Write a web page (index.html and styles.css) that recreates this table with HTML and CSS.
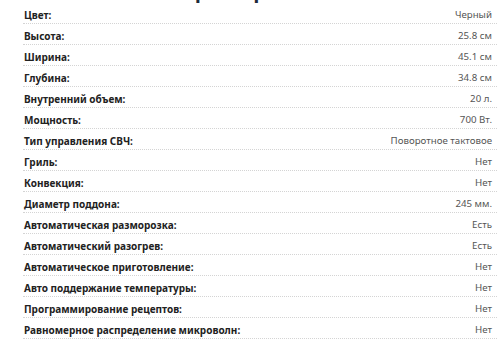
FILE: index.html
```html
<!DOCTYPE html>
<html lang="ru">
<head>
<meta charset="utf-8">
<link rel="stylesheet" href="styles.css">
</head>
<body>
<h2 class="title">Характеристики</h2>
<div class="specs">
  <div class="row"><span class="label">Цвет:</span><span class="value">Черный</span></div>
  <div class="row"><span class="label">Высота:</span><span class="value">25.8 см</span></div>
  <div class="row"><span class="label">Ширина:</span><span class="value">45.1 см</span></div>
  <div class="row"><span class="label">Глубина:</span><span class="value">34.8 см</span></div>
  <div class="row"><span class="label">Внутренний объем:</span><span class="value">20 л.</span></div>
  <div class="row"><span class="label">Мощность:</span><span class="value">700 Вт.</span></div>
  <div class="row"><span class="label">Тип управления СВЧ:</span><span class="value">Поворотное тактовое</span></div>
  <div class="row"><span class="label">Гриль:</span><span class="value">Нет</span></div>
  <div class="row"><span class="label">Конвекция:</span><span class="value">Нет</span></div>
  <div class="row"><span class="label">Диаметр поддона:</span><span class="value">245 мм.</span></div>
  <div class="row"><span class="label">Автоматическая разморозка:</span><span class="value">Есть</span></div>
  <div class="row"><span class="label">Автоматический разогрев:</span><span class="value">Есть</span></div>
  <div class="row"><span class="label">Автоматическое приготовление:</span><span class="value">Нет</span></div>
  <div class="row"><span class="label">Авто поддержание температуры:</span><span class="value">Нет</span></div>
  <div class="row"><span class="label">Программирование рецептов:</span><span class="value">Нет</span></div>
  <div class="row"><span class="label">Равномерное распределение микроволн:</span><span class="value">Нет</span></div>
</div>
</body>
</html>
```
FILE: styles.css
```css
html, body {
  margin: 0;
  padding: 0;
  background: #fff;
}
body {
  font-family: "Noto Sans", "Open Sans", sans-serif;
  overflow: hidden;
}
.title {
  margin: -22px 0 0 10px;
  text-align: center;
  font-size: 20px;
  line-height: 25px;
  font-weight: 700;
  color: #1e2a3a;
}
.specs {
  margin: 0 2px 0 23px;
}
.row {
  display: flex;
  justify-content: space-between;
  align-items: flex-end;
  height: 20px;
  border-bottom: 1px dotted #d4d4d4;
  padding: 0 5px 0 1px;
  font-size: 10px;
  line-height: 14px;
}
.label {
  font-weight: 700;
  color: #222;
  padding-bottom: 1px;
}
.value {
  color: #555;
  font-size: 9.7px;
  padding-bottom: 1px;
}
```
